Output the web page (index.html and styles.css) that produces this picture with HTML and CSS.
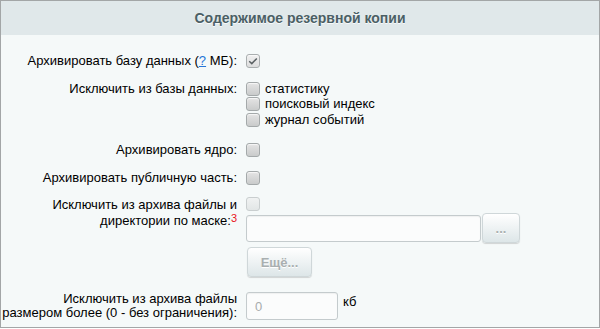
FILE: index.html
```html
<!DOCTYPE html>
<html lang="ru">
<head>
<meta charset="UTF-8">
<meta name="viewport" content="width=device-width, initial-scale=1.0">
<title>Резервное копирование</title>
<link rel="stylesheet" href="styles.css">
</head>
<body>
    <div class="panel">
        <div class="panel-title">Содержимое резервной копии</div>
        <div class="panel-body">
            <div class="row row-db">
                <div class="label">Архивировать базу данных (<a href="#" class="hint">?</a> МБ):</div>
                <div class="field">
                    <span class="cb checked">
                        <svg width="10" height="8" viewBox="0 0 10 8"><path d="M1.2 4.3 L3.8 6.6 L8.8 1.4" fill="none" stroke="#5a6163" stroke-width="1.5"/></svg>
                    </span>
                </div>
            </div>

            <div class="row row-exclude">
                <div class="label">Исключить из базы данных:</div>
                <div class="field list">
                    <div class="item"><span class="cb"></span>статистику</div>
                    <div class="item"><span class="cb"></span>поисковый индекс</div>
                    <div class="item"><span class="cb"></span>журнал событий</div>
                </div>
            </div>

            <div class="row row-kernel">
                <div class="label">Архивировать ядро:</div>
                <div class="field"><span class="cb"></span></div>
            </div>

            <div class="row row-public">
                <div class="label">Архивировать публичную часть:</div>
                <div class="field"><span class="cb"></span></div>
            </div>

            <div class="row row-mask">
                <div class="label">Исключить из архива файлы и<br>директории по маске:<span class="note">3</span></div>
                <div class="field list">
                    <div class="item"><span class="cb disabled"></span></div>
                    <div class="mask-line">
                        <input type="text" class="text-input mask-input" disabled>
                        <button type="button" class="btn btn-dots" disabled>...</button>
                    </div>
                    <button type="button" class="btn btn-more" disabled>Ещё...</button>
                </div>
            </div>

            <div class="row row-size">
                <div class="label">Исключить из архива файлы<br>размером более (0 - без ограничения):</div>
                <div class="field size-line">
                    <input type="text" class="text-input size-input" placeholder="0" disabled>
                    <span class="unit">кб</span>
                </div>
            </div>
        </div>
    </div>
</body>
</html>
```

FILE: styles.css
```css
body {
  margin: 0;
  background-color: #ffffff;
  font-family: "Liberation Sans", Arial, sans-serif;
  font-size: 13px;
  color: #000000;
}
.panel {
  box-sizing: border-box;
  width: 600px;
  height: 328px;
  border: 1px solid #a3a6a7;
  background-color: #f5f9f9;
  overflow: hidden;
}
.panel-title {
  height: 34px;
  line-height: 34px;
  background-color: #e0e8ea;
  text-align: center;
  font-size: 14px;
  font-weight: bold;
  color: #4b5f65;
  text-shadow: 0 1px 0 rgba(255, 255, 255, 0.8);
}
.panel-body {
  padding-top: 18px;
}
.row {
  display: flex;
  align-items: flex-start;
  line-height: 16px;
}
.label {
  width: 236px;
  flex-shrink: 0;
  text-align: right;
}
.field {
  margin-left: 9px;
  display: flex;
  align-items: center;
  height: 16px;
}
.list {
  flex-direction: column;
  align-items: flex-start;
  height: auto;
}
.item {
  display: flex;
  align-items: center;
  height: 15.5px;
}
.row-mask .item {
  height: 16px;
}
.hint {
  color: #2675d7;
}

/* checkboxes */
.cb {
  box-sizing: border-box;
  display: inline-flex;
  align-items: center;
  justify-content: center;
  width: 14px;
  height: 14px;
  margin-right: 5px;
  border: 1px solid #a4a9aa;
  border-radius: 3px;
  background: linear-gradient(#e4e4e4, #c9cbcb);
  box-shadow: inset 0 1px 1px rgba(255, 255, 255, 0.7);
}
.cb.checked {
  background: linear-gradient(#f0f0f0, #dcdddd);
  border-color: #a9aeaf;
}
.cb.disabled {
  background: linear-gradient(#f0f2f2, #e2e6e6);
  border-color: #c9cecf;
  box-shadow: none;
}

.row-exclude { margin-top: 12px; }
.row-kernel { margin-top: 14.5px; }
.row-public { margin-top: 12px; }
.row-mask { margin-top: 10px; }
.row-mask .label { padding-top: 1px; }
.note {
  display: inline-block;
  color: #e8151b;
  font-size: 11px;
  line-height: 11px;
  vertical-align: top;
}

.mask-line {
  display: flex;
  align-items: center;
  height: 30px;
  margin-top: 1px;
}
.text-input {
  box-sizing: border-box;
  height: 27px;
  padding: 0 8px;
  border: 1px solid #c4cbcd;
  border-radius: 3px;
  background-color: #fbfcfc;
  box-shadow: inset 0 1px 1px rgba(0, 0, 0, 0.05);
  font-family: inherit;
  font-size: 13px;
  color: #000000;
}
.text-input::placeholder {
  color: #a8acad;
}
.mask-input {
  width: 235px;
}
.btn {
  box-sizing: border-box;
  height: 30px;
  border: 1px solid #cfd7d9;
  border-radius: 4px;
  background: linear-gradient(#ffffff, #dde6e8);
  box-shadow: 0 1px 1px rgba(0, 0, 0, 0.15);
  font-family: inherit;
  font-size: 13px;
  color: #a9afb0;
  text-shadow: 0 1px 0 #ffffff;
  padding: 0;
}
.btn-dots {
  width: 38px;
  margin-left: 1px;
  font-weight: bold;
}
.btn-more {
  width: 65px;
  margin-top: 4px;
  margin-left: 1px;
  font-weight: bold;
}

.row-size {
  margin-top: 15px;
  align-items: center;
  line-height: 14px;
}
.size-line {
  height: 28px;
}
.size-input {
  width: 92px;
  height: 28px;
}
.unit {
  margin-left: 5px;
  margin-top: -8px;
}
```
